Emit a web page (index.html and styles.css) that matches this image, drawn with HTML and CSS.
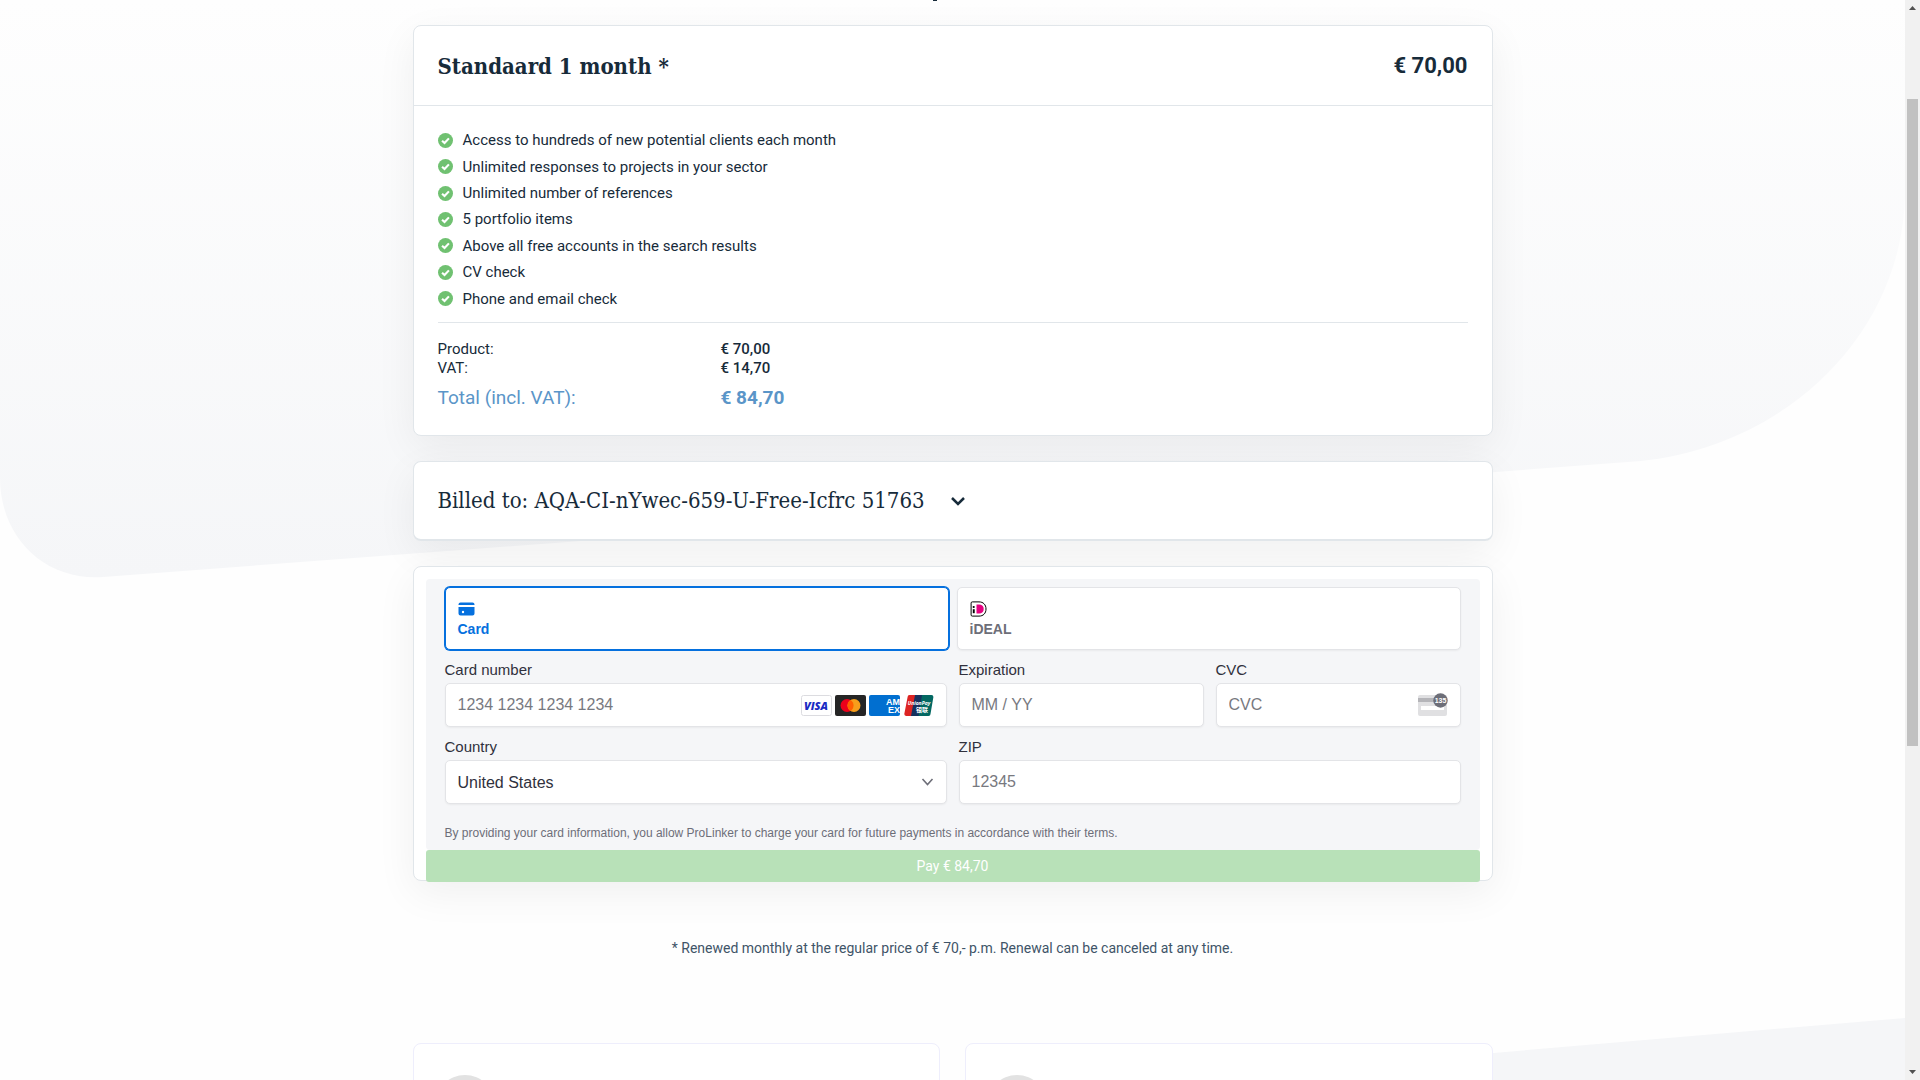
FILE: index.html
```html
<!DOCTYPE html>
<html lang="en">
<head>
<meta charset="utf-8">
<meta name="viewport" content="width=device-width, initial-scale=1">
<title>Payment</title>
<link rel="stylesheet" href="styles.css">
</head>
<body>
<div class="viewport">
  <div class="page">
    <svg class="backdrop" viewBox="0 0 1905 1080" preserveAspectRatio="none" aria-hidden="true">
      <defs><linearGradient id="fade" x1="0" y1="0" x2="0" y2="1"><stop offset="0" stop-color="#fefefe"/><stop offset="1" stop-color="#f5f6f8"/></linearGradient></defs>
      <path fill="url(#fade)" d="M0 0V478C0 535 42 581 103 577L1641 461C1790 445 1905 330 1905 190V0Z"/>
      <path fill="#f5f6f8" d="M1905 1018L1175 1080H1905Z"/>
    </svg>
    <main class="container">
      <div class="heading-edge"><span class="heading-tail"></span></div>

      <section class="card">
        <header class="card-head">
          <h2 class="plan">Standaard 1 month *</h2>
          <span class="price">€ 70,00</span>
        </header>
        <div class="card-body">
          <ul class="features">
            <li><svg class="check" viewBox="0 0 14 14"><circle cx="7" cy="7" r="7"/><path d="M3.8 7.2 6.1 9.4 10.2 5"/></svg>Access to hundreds of new potential clients each month</li>
            <li><svg class="check" viewBox="0 0 14 14"><circle cx="7" cy="7" r="7"/><path d="M3.8 7.2 6.1 9.4 10.2 5"/></svg>Unlimited responses to projects in your sector</li>
            <li><svg class="check" viewBox="0 0 14 14"><circle cx="7" cy="7" r="7"/><path d="M3.8 7.2 6.1 9.4 10.2 5"/></svg>Unlimited number of references</li>
            <li><svg class="check" viewBox="0 0 14 14"><circle cx="7" cy="7" r="7"/><path d="M3.8 7.2 6.1 9.4 10.2 5"/></svg>5 portfolio items</li>
            <li><svg class="check" viewBox="0 0 14 14"><circle cx="7" cy="7" r="7"/><path d="M3.8 7.2 6.1 9.4 10.2 5"/></svg>Above all free accounts in the search results</li>
            <li><svg class="check" viewBox="0 0 14 14"><circle cx="7" cy="7" r="7"/><path d="M3.8 7.2 6.1 9.4 10.2 5"/></svg>CV check</li>
            <li><svg class="check" viewBox="0 0 14 14"><circle cx="7" cy="7" r="7"/><path d="M3.8 7.2 6.1 9.4 10.2 5"/></svg>Phone and email check</li>
          </ul>
          <dl class="totals">
            <dt>Product:</dt><dd>€ 70,00</dd>
            <dt>VAT:</dt><dd>€ 14,70</dd>
            <dt class="total">Total (incl. VAT):</dt><dd class="total">€ 84,70</dd>
          </dl>
        </div>
      </section>

      <section class="card billed">
        <button class="billed-toggle" type="button">Billed to: AQA-CI-nYwec-659-U-Free-Icfrc 51763
          <svg class="chevron" viewBox="0 0 14 10"><path d="M1 2 7 8 13 2"/></svg>
        </button>
      </section>

      <form class="card payment">
        <div class="panel">
          <div class="methods">
            <button class="method selected" type="button">
              <svg class="method-icon" viewBox="0 0 16 16"><path fill="#0570de" d="M0 4V3.500A2 2 0 0 1 2 1.500H14A2 2 0 0 1 16 3.500V4ZM0 6H16V12.500A2 2 0 0 1 14 14.500H2A2 2 0 0 1 0 12.500Z"/><circle cx="4.500" cy="11" r="1.200" fill="#fff"/></svg>
              Card
            </button>
            <button class="method" type="button">
              <svg class="method-icon" viewBox="0 0 16 16"><path fill="#fff" stroke="#000" d="M1.800 .9H8.500C12.800 .9 15.500 3.700 15.500 8S12.800 15.100 8.500 15.100H1.800A1.200 1.200 0 0 1 .6 13.900V2.100A1.200 1.200 0 0 1 1.800 .9Z"/><circle cx="3.200" cy="6" r="1.100"/><path d="M2.300 8.200H4.200V12.200H2.300Z"/><path fill="#e50081" d="M6 3.500H8.600C11.500 3.500 13.200 5.200 13.200 8S11.500 12.500 8.600 12.500H6Z"/></svg>
              iDEAL
            </button>
          </div>
          <div class="fields">
            <div class="field wide">
              <label for="number">Card number</label>
              <div class="control">
                <input id="number" type="text" placeholder="1234 1234 1234 1234">
                <div class="brands">
                  <svg class="brand" viewBox="0 0 31 21"><rect x=".5" y=".5" width="30" height="20" rx="2" fill="#fff" stroke="#dcdce0"/><text class="visa" x="15" y="15" text-anchor="middle">VISA</text></svg>
                  <svg class="brand" viewBox="0 0 31 21"><rect width="31" height="21" rx="2" fill="#252525"/><circle cx="12" cy="10.500" r="6.500" fill="#eb001b"/><circle cx="19" cy="10.500" r="6.500" fill="#f79e1b"/><path fill="#ff5f00" d="M15.500 5A6.500 6.500 0 0 1 15.500 16A6.500 6.500 0 0 1 15.500 5Z"/></svg>
                  <svg class="brand" viewBox="0 0 31 21"><rect width="31" height="21" rx="2" fill="#016fd0"/><text class="amex" x="31" y="10" text-anchor="end">AM</text><text class="amex" x="31" y="18" text-anchor="end">EX</text></svg>
                  <svg class="brand" viewBox="0 0 31 21"><path fill="#dd2423" d="M6.500 0H14L9.500 21H3A2 2 0 0 1 1.300 19L4.600 2A2 2 0 0 1 6.500 0Z"/><path fill="#16315e" d="M12 0H20L17 21H8Z"/><path fill="#036862" d="M19 0H28.500A2 2 0 0 1 30.400 2L27.500 19A2 2 0 0 1 25.500 21H15.500Z"/><text class="union" x="16" y="10" text-anchor="middle">UnionPay</text><text class="union-cjk" x="13" y="17">银联</text></svg>
                </div>
              </div>
            </div>
            <div class="field">
              <label for="expiry">Expiration</label>
              <div class="control"><input id="expiry" type="text" placeholder="MM / YY"></div>
            </div>
            <div class="field">
              <label for="cvc">CVC</label>
              <div class="control">
                <input id="cvc" type="text" placeholder="CVC">
                <svg class="cvc-icon" viewBox="0 0 30 24"><rect y="2" width="29" height="21" rx="2" fill="#e0e0e2"/><path fill="#b5b5b9" d="M0 5H29V9H0Z"/><path fill="#fff" d="M3 13H26V17H3Z"/><circle cx="22.500" cy="7.500" r="7.200" fill="#6d6e78"/><text class="cvc-digits" x="22.500" y="10" text-anchor="middle">135</text></svg>
              </div>
            </div>
            <div class="field wide">
              <label for="country">Country</label>
              <div class="control">
                <select id="country"><option>United States</option></select>
                <svg class="arrow" viewBox="0 0 12 8"><path d="M1 1 6 6.500 11 1"/></svg>
              </div>
            </div>
            <div class="field wide">
              <label for="zip">ZIP</label>
              <div class="control"><input id="zip" type="text" placeholder="12345"></div>
            </div>
          </div>
          <p class="terms">By providing your card information, you allow ProLinker to charge your card for future payments in accordance with their terms.</p>
        </div>
        <button class="pay" type="submit">Pay € 84,70</button>
      </form>

      <p class="renewal">* Renewed monthly at the regular price of € 70,- p.m. Renewal can be canceled at any time.</p>

      <div class="reviews">
        <article class="review"><span class="avatar"></span></article>
        <article class="review"><span class="avatar"></span></article>
      </div>
    </main>
  </div>
  <div class="scrollbar" aria-hidden="true">
    <svg class="scroll-arrow" viewBox="0 0 15 15"><path d="M4 10H11L7.500 6Z"/></svg>
    <div class="track"><div class="thumb"></div></div>
    <svg class="scroll-arrow" viewBox="0 0 15 15"><path d="M4 5H11L7.500 9Z"/></svg>
  </div>
</div>
</body>
</html>
```

FILE: styles.css
```css
* {
  box-sizing: border-box;
}

body {
  margin: 0;
  font-family: Roboto, sans-serif;
  font-size: 15px;
  color: #172b3a;
  background: #fefefe;
}

h2, p, ul, dl, dd {
  margin: 0;
  padding: 0;
}

button, input, select {
  font: inherit;
  color: inherit;
}

.viewport {
  display: flex;
  height: 100vh;
  overflow: hidden;
}

.page {
  position: relative;
  flex: 1;
  overflow: hidden;
}

.backdrop {
  position: absolute;
  inset: 0;
  width: 100%;
  height: 100%;
}

.container {
  position: relative;
  max-width: 1080px;
  margin: 0 auto;
}

.heading-edge {
  display: flex;
  justify-content: center;
  height: 25px;
  padding-right: 36px;
}

.heading-tail {
  width: 4px;
  height: 1px;
  background: #172b3a;
}

.card {
  margin-bottom: 25px;
  background: #fff;
  border: 1px solid #e1e6ea;
  border-radius: 8px;
  box-shadow: 0 12px 40px rgba(0, 0, 0, 0.06);
}

.card-head {
  display: flex;
  align-items: center;
  justify-content: space-between;
  height: 80px;
  padding: 0 24px;
  border-bottom: 1px solid #e1e6ea;
}

.plan {
  font-family: "Roboto Slab", "DejaVu Serif Condensed", "DejaVu Serif", serif;
  font-size: 22px;
  font-weight: 700;
}

.price {
  font-size: 22px;
  font-weight: 700;
}

.card-body {
  padding: 21px 24px 25px;
}

.features {
  display: grid;
  grid-auto-rows: 1fr;
  height: 196px;
  padding-bottom: 10px;
  border-bottom: 1px solid #e1e6ea;
  list-style: none;
}

.features li {
  display: flex;
  align-items: center;
  gap: 10px;
}

.check {
  width: 15px;
  height: 15px;
  fill: #70c171;
}

.check path {
  fill: none;
  stroke: #fff;
  stroke-width: 2;
}

.totals {
  display: grid;
  grid-template-columns: 283px 1fr;
  padding-top: 17px;
  line-height: 19px;
}

.totals dd {
  font-weight: 500;
}

.totals .total {
  padding-top: 8px;
  font-size: 19px;
  line-height: 24px;
  color: #5a95c8;
}

.totals dd.total {
  font-weight: 700;
}

.billed {
  border-bottom-width: 2px;
}

.billed-toggle {
  display: flex;
  align-items: center;
  gap: 26px;
  width: 100%;
  height: 77px;
  padding: 0 24px;
  border: 0;
  background: none;
  font-family: "Roboto Slab", "DejaVu Serif Condensed", "DejaVu Serif", serif;
  font-size: 22px;
  text-align: left;
}

.chevron {
  width: 14px;
  height: 10px;
  fill: none;
  stroke: #172b3a;
  stroke-width: 2.5;
}

.payment {
  height: 315px;
  padding: 12px;
}

.panel {
  height: 271px;
  padding: 8px 19px 0;
  background: #f5f6f8;
  border-radius: 4px;
  font-family: "Liberation Sans", Arial, sans-serif;
  color: #30313d;
}

.methods {
  display: grid;
  grid-template-columns: 1fr 1fr;
  gap: 8px;
}

.method {
  display: flex;
  flex-direction: column;
  align-items: flex-start;
  justify-content: center;
  gap: 4px;
  height: 63px;
  padding: 0 12px;
  border: 1px solid #e3e4e7;
  border-radius: 5px;
  background: #fff;
  box-shadow: 0 1px 2px rgba(0, 0, 0, 0.05);
  font-size: 14px;
  line-height: 16px;
  font-weight: 700;
  color: #6d6e78;
}

.method.selected {
  border-color: #0570de;
  box-shadow: 0 0 0 1px #0570de;
  color: #0570de;
}

.method-icon {
  width: 17px;
  height: 16px;
}

.fields {
  display: grid;
  grid-template-columns: repeat(4, minmax(0, 1fr));
  gap: 11px 12px;
  padding-top: 11px;
}

.wide {
  grid-column: span 2;
}

.field {
  display: flex;
  flex-direction: column;
  gap: 5px;
}

.field label {
  font-size: 15px;
  line-height: 17px;
}

.control {
  display: flex;
  align-items: center;
  height: 44px;
  padding: 0 12px;
  border: 1px solid #e3e4e7;
  border-radius: 5px;
  background: #fff;
  box-shadow: 0 1px 2px rgba(0, 0, 0, 0.05);
}

.control input,
.control select {
  flex: 1;
  min-width: 0;
  padding: 0;
  border: 0;
  outline: 0;
  appearance: none;
  background: none;
  font-size: 16px;
}

.control input::placeholder {
  color: #78797f;
}

.brands {
  display: flex;
  gap: 3px;
}

.brand {
  width: 31px;
  height: 21px;
}

.visa {
  font: italic 800 11px "Open Sans", sans-serif;
  fill: #1a2bc3;
}

.amex {
  font: 700 9px "Liberation Sans", sans-serif;
  fill: #fff;
}

.union {
  font: italic 700 5px "Open Sans", sans-serif;
  fill: #fff;
}

.union-cjk {
  font: 700 6px "Noto Sans CJK SC", sans-serif;
  fill: #fff;
}

.cvc-icon {
  width: 30px;
  height: 24px;
}

.cvc-digits {
  font: 700 7px "Liberation Sans", sans-serif;
  fill: #fff;
}

.arrow {
  width: 13px;
  height: 8px;
  fill: none;
  stroke: #6d6e78;
  stroke-width: 1.6;
}

.terms {
  padding-top: 22px;
  font-size: 12px;
  line-height: 14px;
  color: #6d6e78;
}

.pay {
  display: block;
  width: 100%;
  height: 32px;
  border: 0;
  border-radius: 3px;
  background: #b8e1b8;
  font-size: 14px;
  color: #fff;
}

.renewal {
  padding-top: 33px;
  font-size: 14px;
  line-height: 18px;
  text-align: center;
  color: #3f5468;
}

.reviews {
  display: grid;
  grid-template-columns: 1fr 1fr;
  gap: 25px;
  padding-top: 86px;
}

.review {
  height: 160px;
  padding: 31px 21px;
  background: #fff;
  border: 1px solid #eeeefc;
  border-radius: 8px;
}

.avatar {
  display: block;
  width: 60px;
  height: 60px;
  border-radius: 50%;
  background: #e2e2e2;
}

.scrollbar {
  display: flex;
  flex-direction: column;
  width: 15px;
  background: #f1f1f1;
}

.scroll-arrow {
  width: 15px;
  height: 15px;
  fill: #505050;
}

.track {
  flex: 1;
  padding: 84px 2px 0;
}

.thumb {
  height: 67%;
  background: #c1c1c1;
}
```
